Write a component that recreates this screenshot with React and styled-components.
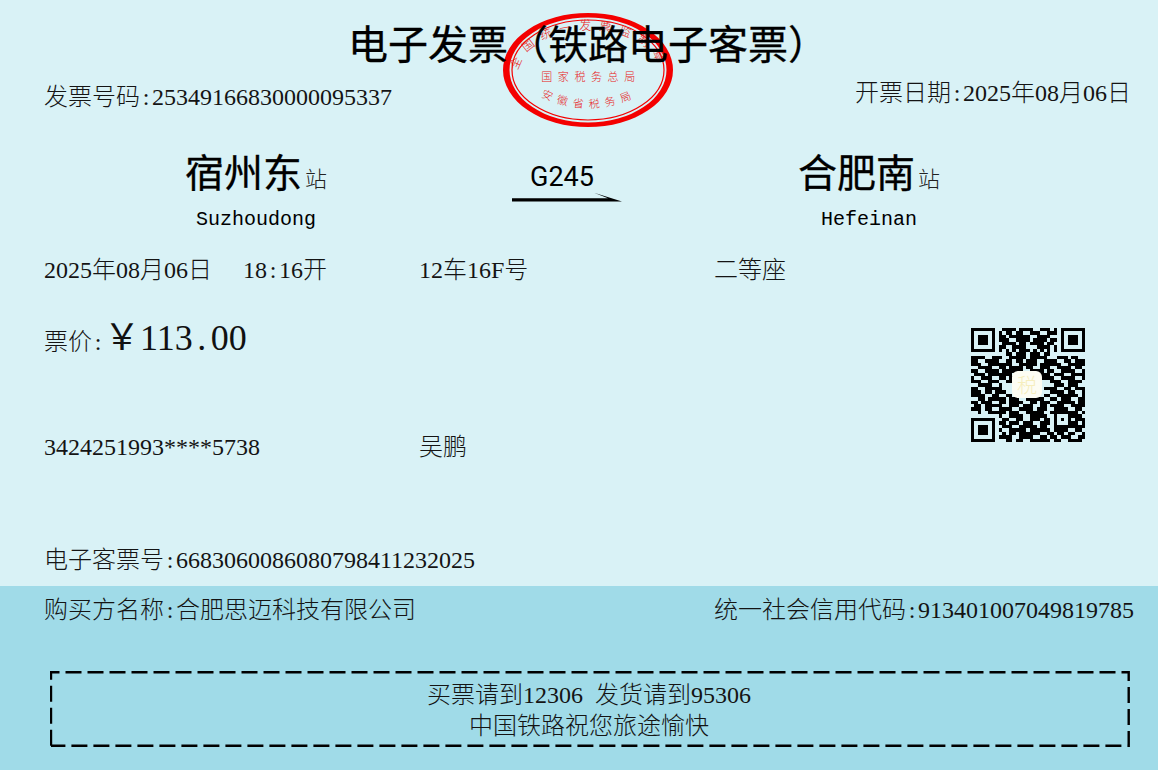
import React from "react";
import styled, { createGlobalStyle } from "styled-components";

const Global = createGlobalStyle`
  html, body { margin: 0; padding: 0; background: #d9f2f6; }
  body { font-family: "Liberation Serif", "Noto Sans CJK SC", serif; font-size: 24px; font-weight: 300; line-height: 24px; color: #141414; }
`;

const Ticket = styled.div`
  position: relative;
  width: 1158px;
  height: 770px;
  overflow: hidden;
  display: flex;
  flex-direction: column;
  background: #d9f2f6;
`;
const Upper = styled.section`
  height: 586px;
  flex: none;
`;
const Title = styled.h1`
  position: relative;
  z-index: 1;
  margin: 0;
  padding: 22px 0 2px 18px;
  height: 40px;
  font: 400 40px/40px "Noto Sans CJK SC", sans-serif;
  -webkit-text-stroke: 0.3px #000;
  color: #000;
  text-align: center;
`;
const MetaRow = styled.div`
  display: flex;
  justify-content: space-between;
  align-items: flex-start;
  padding: 17px 27px 0 44px;
  position: relative;
  z-index: 1;
`;
const MetaText = styled.div`
  margin-top: ${(p) => p.$drop || 0}px;
  white-space: nowrap;
`;
const Colon = styled.span`
  display: inline-block;
  width: 0.5em;
  text-align: center;
`;
const RouteRow = styled.div`
  display: grid;
  grid-template-columns: 424px 198px 406px;
  padding: 38px 0 0 44px;
`;
const Station = styled.div`
  display: flex;
  flex-direction: column;
  align-items: center;
`;
const StationName = styled.div`
  display: flex;
  align-items: baseline;
  font: 400 39px/46px "Noto Sans CJK SC", sans-serif;
  -webkit-text-stroke: 0.3px #000;
  color: #000;
`;
const StationSuffix = styled.span`
  margin-left: 3px;
  font-size: 22px;
  font-weight: 300;
  -webkit-text-stroke: 0;
  color: #222;
`;
const Pinyin = styled.div`
  margin-top: 8px;
  font: 400 20px/24px "Liberation Mono", monospace;
  color: #000;
`;
const Train = styled.div`
  display: flex;
  flex-direction: column;
  align-items: center;
  padding-top: 14px;
`;
const TrainNo = styled.div`
  margin-left: -10px;
  font: 400 27px/32px Roboto, sans-serif;
  color: #000;
`;
const DataRow = styled.div`
  display: grid;
  grid-template-columns: 375px 295px 1fr;
  padding: ${(p) => p.$pad || 0};
  white-space: nowrap;
`;
const DateCell = styled.div`
  display: flex;
  gap: 31px;
`;
const Middle = styled.div`
  display: flex;
  justify-content: space-between;
  padding: 38px 73px 0 44px;
`;
const MiddleLeft = styled.div`
  display: flex;
  flex-direction: column;
`;
const PriceRow = styled.div`
  display: flex;
  align-items: baseline;
  height: 36px;
`;
const Amount = styled.span`
  font-size: 36px;
  line-height: 36px;
  font-weight: 400;
  color: #111;
`;
const QrBox = styled.div`
  position: relative;
  width: 114px;
  height: 114px;
  margin-top: 8px;
`;
const QrLogo = styled.div`
  position: absolute;
  left: 41px;
  top: 43px;
  width: 30px;
  height: 27px;
  display: flex;
  align-items: center;
  justify-content: center;
  border-radius: 6px;
  background: #fdfdf3;
  font: 300 20px/22px "Noto Sans CJK SC", sans-serif;
  color: #f6eebd;
`;
const TicketNo = styled.div`
  margin-top: 89px;
  padding-left: 44px;
`;
const Band = styled.section`
  flex: 1;
  background: #a0dbe8;
  padding-top: 12px;
`;
const BuyerRow = styled.div`
  display: grid;
  grid-template-columns: 670px 1fr;
  padding-left: 44px;
  white-space: nowrap;
`;
const NoticeBox = styled.div`
  position: relative;
  width: 1080px;
  height: 78px;
  margin: 49px 0 0 50px;
  padding-right: 2px;
  box-sizing: border-box;
  display: flex;
  flex-direction: column;
  align-items: center;
  justify-content: center;
  gap: 7px;
`;
const NoticeFrame = styled.svg`
  position: absolute;
  left: 0;
  top: 0;
`;
const StampArt = styled.svg`
  position: absolute;
  left: 503px;
  top: 12px;
`;
const ArrowArt = styled.svg`
  display: block;
  margin-top: -1px;
`;

const QR = [
  "000000000111101111001110100000000",
  "000000001011011001110011100000000",
  "000000001101111110011110000000000",
  "000000001110011110111101100000000",
  "000000000111101101111011000000000",
  "000000001100111100011110100000000",
  "111111111010101110101010111111111",
  "000000000011011101110110000000000",
  "111100111001111101111100011101100",
  "110011110011011011100111100110111",
  "111001111111001111101111110011111",
  "001111001101111011001110011110110",
  "110011110111111001111011001111001",
  "011101111111001110011110111001111",
  "100111001101100000001111001111001",
  "111001110011000000000001110011110",
  "001111001000000000000000111011100",
  "110011111000000000000111100110111",
  "111011011100000000000001111011001",
  "111100110011000000000110011111101",
  "001101111101110011111001101110011",
  "110111001101111001101110011111011",
  "011011111001110111001101111001111",
  "111011001111001111011100111100110",
  "001001111101110011111001011001101",
  "000000001001111001111100000001110",
  "000000000110011001110110000000111",
  "000000001101110111001110000011101",
  "000000000111001111101100000001111",
  "000000001001111101111110111100110",
  "000000000101101111110011011011001",
  "000000001111001111001101101110011",
  "000000000011011001111110110011110",
];

const qrCell = (r, c) => {
  const finder = (ox, oy) => {
    const x = c - ox;
    const y = r - oy;
    if (x < -1 || y < -1 || x > 7 || y > 7) return null;
    if (x < 0 || y < 0 || x > 6 || y > 6) return false;
    if (x === 0 || y === 0 || x === 6 || y === 6) return true;
    return x >= 2 && x <= 4 && y >= 2 && y <= 4;
  };
  for (const [ox, oy] of [[0, 0], [26, 0], [0, 26]]) {
    const v = finder(ox, oy);
    if (v !== null) return v;
  }
  const ax = Math.abs(c - 26);
  const ay = Math.abs(r - 26);
  if (ax <= 2 && ay <= 2) return Math.max(ax, ay) !== 1;
  return QR[r][c] === "1";
};

const qrPath = () => {
  let d = "";
  for (let r = 0; r < 33; r++) {
    for (let c = 0; c < 33; c++) {
      if (!qrCell(r, c)) continue;
      let e = c;
      while (e + 1 < 33 && qrCell(r, e + 1)) e++;
      d += `M${c} ${r}h${e - c + 1}v1h-${e - c + 1}z`;
      c = e;
    }
  }
  return d;
};

const Stamp = () => (
  <StampArt width="172" height="118" viewBox="503 12 172 118">
    <defs>
      <path id="stampTop" d="M519 72 A70 42 0 0 1 659 72" />
      <path id="stampBottom" d="M536 94 Q588 122 642 94" />
    </defs>
    <path
      fillRule="evenodd"
      fill="#f40000"
      d="M503 70a85 57 0 1 0 170 0a85 57 0 1 0 -170 0zM509.500 70a78.500 52.500 0 1 0 157 0a78.500 52.500 0 1 0 -157 0z"
    />
    <ellipse cx="588" cy="70" rx="76" ry="50" fill="none" stroke="#f40000" strokeWidth="1.2" />
    <g fill="#e82020" fontFamily="'Noto Sans CJK SC', sans-serif">
      <text fontSize="12" letterSpacing="7.5" textAnchor="middle">
        <textPath href="#stampTop" startOffset="50%">全国统一发票监制章</textPath>
      </text>
      <text x="591" y="81" fontSize="11" letterSpacing="5.600" textAnchor="middle">国家税务总局</text>
      <text fontSize="11" letterSpacing="5.600" textAnchor="middle">
        <textPath href="#stampBottom" startOffset="50%">安徽省税务局</textPath>
      </text>
    </g>
  </StampArt>
);

const Arrow = () => (
  <ArrowArt width="112" height="14" viewBox="0 0 112 14">
    <path d="M1 6.200H97L83 0.700L111 9.600L1 9.400Z" fill="#000" />
  </ArrowArt>
);

const Frame = () => (
  <NoticeFrame width="1082" height="78" viewBox="0 0 1082 78">
    <path
      d="M1 74.700V1.200H1078.700V74.700H1"
      fill="none"
      stroke="#000"
      strokeWidth="2.400"
      strokeDasharray="16 6"
    />
  </NoticeFrame>
);

export default function App() {
  return (
    <Ticket>
      <Global />
      <Stamp />
      <Upper>
        <Title>电子发票（铁路电子客票）</Title>
        <MetaRow>
          <MetaText $drop={4}>发票号码<Colon>:</Colon>25349166830000095337</MetaText>
          <MetaText>开票日期<Colon>:</Colon>2025年08月06日</MetaText>
        </MetaRow>
        <RouteRow>
          <Station>
            <StationName>宿州东<StationSuffix>站</StationSuffix></StationName>
            <Pinyin>Suzhoudong</Pinyin>
          </Station>
          <Train>
            <TrainNo>G245</TrainNo>
            <Arrow />
          </Train>
          <Station>
            <StationName>合肥南<StationSuffix>站</StationSuffix></StationName>
            <Pinyin>Hefeinan</Pinyin>
          </Station>
        </RouteRow>
        <DataRow $pad="26px 0 0 44px">
          <DateCell>
            <span>2025年08月06日</span>
            <span>18<Colon>:</Colon>16开</span>
          </DateCell>
          <span>12车16F号</span>
          <span>二等座</span>
        </DataRow>
        <Middle>
          <MiddleLeft>
            <PriceRow>
              <span>票价<Colon>:</Colon></span>
              <Amount>￥113<Colon>.</Colon>00</Amount>
            </PriceRow>
            <DataRow $pad="79px 0 0 0">
              <span>3424251993****5738</span>
              <span>吴鹏</span>
            </DataRow>
          </MiddleLeft>
          <QrBox>
            <svg width="114" height="114" viewBox="0 0 33 33" shapeRendering="crispEdges">
              <path d={qrPath()} fill="#000" />
            </svg>
            <QrLogo>税</QrLogo>
          </QrBox>
        </Middle>
        <TicketNo>电子客票号<Colon>:</Colon>6683060086080798411232025</TicketNo>
      </Upper>
      <Band>
        <BuyerRow>
          <span>购买方名称<Colon>:</Colon>合肥思迈科技有限公司</span>
          <span>统一社会信用代码<Colon>:</Colon>913401007049819785</span>
        </BuyerRow>
        <NoticeBox>
          <Frame />
          <div>买票请到12306&ensp;发货请到95306</div>
          <div>中国铁路祝您旅途愉快</div>
        </NoticeBox>
      </Band>
    </Ticket>
  );
}
